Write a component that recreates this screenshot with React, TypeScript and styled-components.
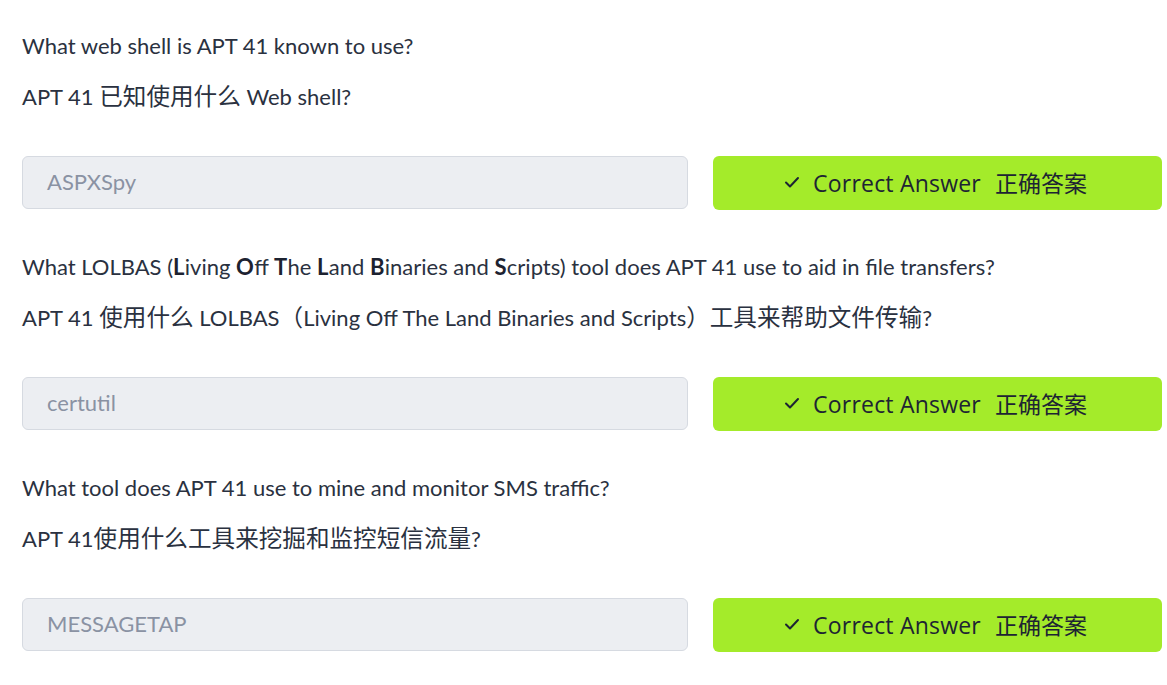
import React from "react";
import styled, { createGlobalStyle } from "styled-components";

const Global = createGlobalStyle`
  html, body { margin: 0; padding: 0; background: #ffffff; }
  body { font-family: Lato, "Noto Sans CJK SC", sans-serif; }
`;

const Page = styled.div`
  padding: 32px 5px 0 22px;
  display: flex;
  flex-direction: column;
  gap: 43px;
`;

const Block = styled.section`
  display: flex;
  flex-direction: column;
  gap: 45px;
`;

const QuestionBox = styled.div`
  display: flex;
  flex-direction: column;
  gap: 23px;
`;

const Line = styled.p`
  margin: 0;
  font-family: Lato, "Noto Sans CJK SC", sans-serif;
  font-size: 22px;
  line-height: 28px;
  height: 28px;
  color: #2a3140;
  white-space: nowrap;
  b { font-weight: 700; color: #1c2230; letter-spacing: 0.3px; }
`;

const Han = styled.span`
  font-family: "Noto Sans CJK SC", sans-serif;
  font-size: 23.6px;
  line-height: 1;
`;

const Row = styled.div`
  display: grid;
  grid-template-columns: 666px 449px;
  gap: 25px;
`;

const AnswerField = styled.div`
  box-sizing: border-box;
  height: 53px;
  border: 1px solid #d6dae1;
  border-radius: 6px;
  background: #eceef2;
  display: flex;
  align-items: center;
  padding-left: 24px;
  padding-bottom: 2px;
  font-family: Lato, sans-serif;
  font-size: 22px;
  color: #8a92a3;
`;

const CorrectButton = styled.div`
  box-sizing: border-box;
  height: 54px;
  border-radius: 6px;
  background: #a4eb2a;
  display: flex;
  align-items: center;
  justify-content: center;
  gap: 13px;
  color: #1d2433;
  font-family: "Open Sans", "Noto Sans CJK SC", sans-serif;
  font-size: 23px;
  padding-right: 4px;
  padding-bottom: 2px;
`;

const Label = styled.span`
  letter-spacing: 0.2px;
`;

const Zh = styled.span`
  margin-left: 14px;
  font-family: "Noto Sans CJK SC", sans-serif;
`;

const Check = () => (
  <svg width="16" height="16" viewBox="0 0 16 16" fill="none">
    <path d="M2 8.5 L6 12.5 L14 4" stroke="#1d2433" strokeWidth="2" strokeLinecap="round" strokeLinejoin="round" />
  </svg>
);

type Q = { en: React.ReactNode; zh: React.ReactNode; answer: string };

const data: Q[] = [
  {
    en: "What web shell is APT 41 known to use?",
    zh: (
      <>
        APT 41 <Han>已知使用什么</Han> Web shell?
      </>
    ),
    answer: "ASPXSpy",
  },
  {
    en: (
      <>
        What LOLBAS (<b>L</b>iving <b>O</b>ff <b>T</b>he <b>L</b>and <b>B</b>inaries and <b>S</b>cripts) tool does APT 41 use to aid in file transfers?
      </>
    ),
    zh: (
      <>
        APT 41 <Han>使用什么</Han> LOLBAS<Han>（</Han>Living Off The Land Binaries and Scripts<Han>）工具来帮助文件传输</Han>?
      </>
    ),
    answer: "certutil",
  },
  {
    en: "What tool does APT 41 use to mine and monitor SMS traffic?",
    zh: (
      <>
        APT 41<Han>使用什么工具来挖掘和监控短信流量</Han>?
      </>
    ),
    answer: "MESSAGETAP",
  },
];

export default function App() {
  return (
    <>
      <Global />
      <Page>
        {data.map((q, i) => (
          <Block key={i}>
            <QuestionBox>
              <Line>{q.en}</Line>
              <Line>{q.zh}</Line>
            </QuestionBox>
            <Row>
              <AnswerField>{q.answer}</AnswerField>
              <CorrectButton>
                <Check />
                <span>
                  <Label>Correct Answer</Label>
                  <Zh>正确答案</Zh>
                </span>
              </CorrectButton>
            </Row>
          </Block>
        ))}
      </Page>
    </>
  );
}
